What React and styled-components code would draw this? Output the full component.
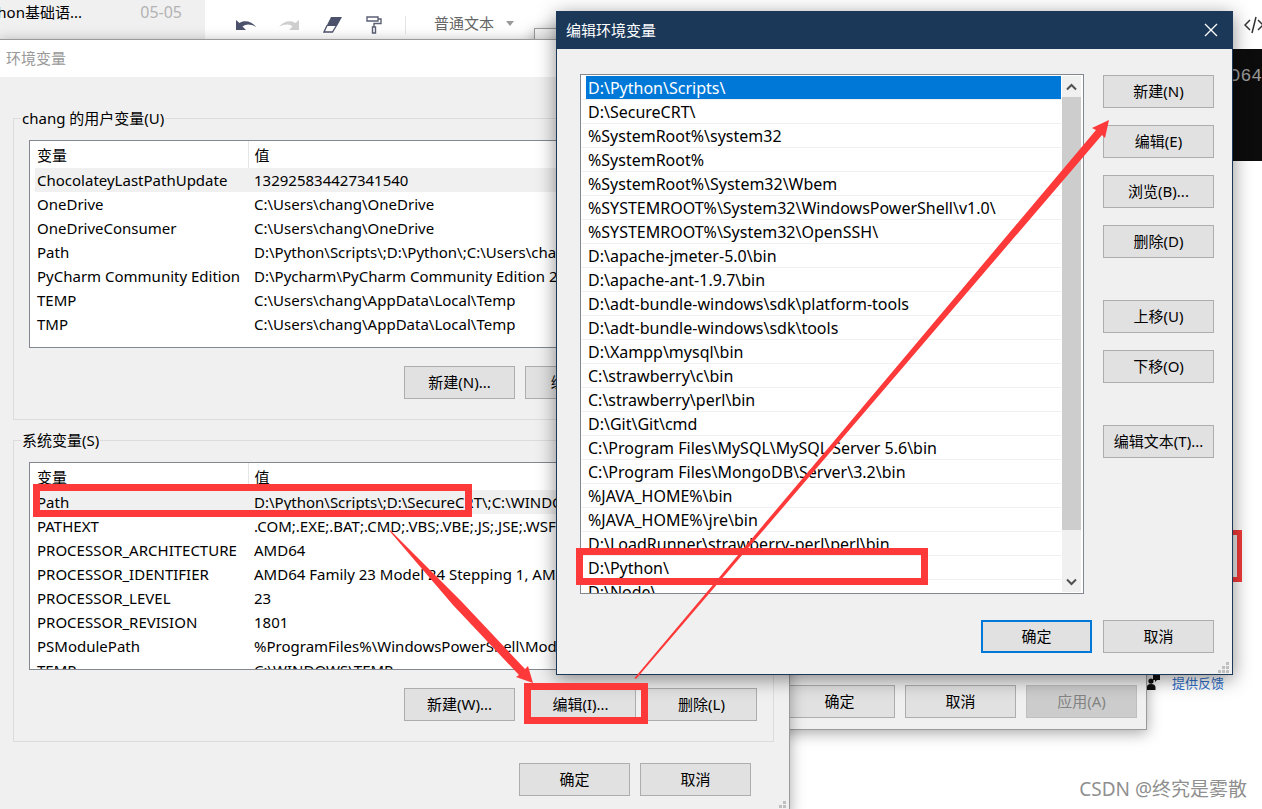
import React from "react";
import styled, { createGlobalStyle, css } from "styled-components";

const Global = createGlobalStyle`
  *, *::before, *::after { box-sizing: border-box; }
  html, body { margin: 0; padding: 0; }
  body {
    background: #fff;
    color: #000;
    font-family: "Noto Sans", "Noto Sans CJK SC", sans-serif;
    font-size: 15px;
    line-height: 24px;
  }
  button { font: inherit; color: inherit; }
`;

const Desktop = styled.main`
  position: relative;
  min-height: 100vh;
  overflow: hidden;
`;

/* ---------- editor page behind the dialogs ---------- */

const EditorHeader = styled.header`
  display: flex;
  align-items: stretch;
  height: 49px;
`;

const NoteTab = styled.div`
  display: flex;
  justify-content: space-between;
  width: 205px;
  padding-right: 23px;
  background: #f0f0f0;
`;

const NoteTitle = styled.span`
  width: 82px;
  overflow: hidden;
  direction: rtl;
  white-space: nowrap;
  text-align: right;
`;

const NoteDate = styled.time`
  color: #b3b3b3;
  font-size: 16px;
`;

const Toolbar = styled.div`
  flex: 1;
  display: flex;
  align-items: center;
  gap: 22px;
  padding-left: 30px;
`;

const IconButton = styled.button`
  display: flex;
  padding: 0;
  border: 0;
  background: none;
  svg { display: block; }
`;

const ToolDivider = styled.span`
  width: 1px;
  height: 18px;
  background: #e4e4e4;
`;

const StyleButton = styled.button`
  display: flex;
  align-items: center;
  gap: 12px;
  margin-left: 6px;
  padding: 0 0 3px;
  border: 0;
  background: none;
  color: #666;
`;

const CodeButton = styled(IconButton)`
  margin-left: auto;
`;

const Terminal = styled.pre`
  height: 112px;
  margin: 0;
  padding: 14px 0 0;
  overflow: hidden;
  background: #0c0c0c;
  color: #999;
  font: 18px/26px "Liberation Mono", monospace;
  text-align: right;
`;

const FocusFrame = styled.div`
  position: absolute;
  top: 530px;
  right: 20px;
  width: 60px;
  height: 52px;
  border: 5px solid #f23a3a;
  background: #e8e8e8;
`;

const Feedback = styled.a`
  position: absolute;
  top: 671px;
  right: 38px;
  display: flex;
  align-items: center;
  gap: 12px;
  color: #2f6fc9;
  font-size: 13px;
  text-decoration: none;
`;

const Watermark = styled.p`
  position: absolute;
  right: 15px;
  bottom: 8px;
  margin: 0;
  color: #8f8f8f;
  font-size: 19px;
`;

/* ---------- windows ---------- */

const Window = styled.section`
  position: absolute;
  background: #f0f0f0;
  border: 1px solid #9a9a9a;
  box-shadow: 0 3px 14px rgba(0, 0, 0, 0.35);
`;

const PropertiesWindow = styled(Window)`
  top: 28px;
  left: 534px;
  right: 115px;
  height: 702px;
  display: flex;
  align-items: flex-end;
  justify-content: flex-end;
  gap: 10px;
  padding: 0 9px 11px;
`;

const VariablesWindow = styled(Window)`
  top: 39px;
  left: -1px;
  right: 472px;
`;

const EditWindow = styled(Window)`
  top: 11px;
  left: 556px;
  right: 29px;
  border-color: #1b3859;
  box-shadow: 0 4px 18px rgba(0, 0, 0, 0.45);
`;

const TitleBar = styled.header`
  display: flex;
  align-items: center;
  justify-content: space-between;
  height: 37px;
  padding: 0 14px 2px ${(p) => (p.$active ? 9 : 6)}px;
  background: ${(p) => (p.$active ? "#1b3859" : "#fff")};
  color: ${(p) => (p.$active ? "#fff" : "#999")};
`;

const Title = styled.h2`
  margin: 0;
  font-size: 15px;
  font-weight: 400;
`;

const PushButton = styled.button`
  width: 111px;
  height: 33px;
  padding: 0 0 2px;
  border: 1px solid #adadad;
  background: #e1e1e1;
  ${(p) => p.$primary && css`border: 2px solid #0078d7;`}
  &:disabled {
    border-color: #bfbfbf;
    background: #ccc;
    color: #838383;
  }
`;

const ButtonRow = styled.div`
  display: flex;
  justify-content: flex-end;
  gap: 10px;
`;

const VariablesFooter = styled(ButtonRow)`
  padding: 0 38px 17px 13px;
`;

const VariablesBody = styled.div`
  display: flex;
  flex-direction: column;
  gap: 8px;
  padding: 29px 15px 21px 13px;
`;

const Group = styled.fieldset`
  min-width: 0;
  margin: 0;
  padding: 10px 16px 20px 15px;
  border: 1px solid #dcdcdc;
`;

const GroupLabel = styled.legend`
  margin-left: -8px;
  padding: 0 1px;
`;

const VariableList = styled.div`
  height: 208px;
  margin-bottom: 18px;
  padding-left: 5px;
  overflow: hidden;
  border: 1px solid #828790;
  background: #fff;
`;

const VariableTable = styled.table`
  width: 100%;
  table-layout: fixed;
  border-collapse: collapse;
  text-align: left;
  white-space: nowrap;
`;

const HeadCell = styled.th`
  width: ${(p) => (p.$name ? "213px" : "auto")};
  height: 27px;
  padding: 0 0 0 ${(p) => (p.$name ? 2 : 6)}px;
  border-right: 1px solid #e5e5e5;
  font-weight: 400;
`;

const VariableRow = styled.tr`
  height: 24px;
  background: ${(p) => (p.$selected ? "#f0f0f0" : "#fff")};
`;

const Cell = styled.td`
  height: 24px;
  padding: 0 0 0 ${(p) => (p.$name ? 2 : 6)}px;
  overflow: hidden;
`;

const EditBody = styled.div`
  display: grid;
  grid-template-columns: minmax(0, 1fr) 111px;
  column-gap: 19px;
  row-gap: 26px;
  padding: 25px 18px 21px 23px;
`;

const PathBox = styled.div`
  display: flex;
  gap: 1px;
  height: 520px;
  padding: 1px 2px 1px 1px;
  overflow: hidden;
  border: 1px solid #828790;
  background: #fff;
`;

const PathList = styled.ul`
  flex: 1;
  min-width: 0;
  margin: 0;
  padding: 0;
  list-style: none;
`;

const PathItem = styled.li`
  height: 24px;
  padding-left: 4px;
  border-bottom: 1px solid #f0f0f0;
`;

const PathText = styled.span`
  display: block;
  height: 23px;
  padding-left: 2px;
  overflow: hidden;
  white-space: nowrap;
  font-size: 16px;
  background: ${(p) => (p.$selected ? "#0078d7" : "none")};
  color: ${(p) => (p.$selected ? "#fff" : "#000")};
`;

const ScrollBar = styled.div`
  display: flex;
  flex-direction: column;
  width: 19px;
  background: #f0f0f0;
`;

const ScrollArrow = styled.button`
  display: flex;
  align-items: center;
  justify-content: center;
  height: 21px;
  padding: 0;
  border: 0;
  background: none;
`;

const ScrollThumb = styled.div`
  height: 433px;
  margin-bottom: auto;
  background: #cdcdcd;
`;

const SideButtons = styled.div`
  display: flex;
  flex-direction: column;
  gap: 17px;
  padding-top: 1px;
`;

const SideGroup = styled.div`
  display: flex;
  flex-direction: column;
  gap: 17px;
  margin-bottom: 25px;
`;

const EditFooter = styled(ButtonRow)`
  grid-column: 1 / -1;
  gap: 11px;
`;

const Grip = styled.svg`
  position: absolute;
  right: 3px;
  bottom: 1px;
`;

const Annotations = styled.svg`
  position: absolute;
  top: 0;
  left: 0;
  pointer-events: none;
`;

/* ---------- data ---------- */

const userVariables = [
  ["ChocolateyLastPathUpdate", "132925834427341540"],
  ["OneDrive", "C:\\Users\\chang\\OneDrive"],
  ["OneDriveConsumer", "C:\\Users\\chang\\OneDrive"],
  ["Path", "D:\\Python\\Scripts\\;D:\\Python\\;C:\\Users\\chang"],
  ["PyCharm Community Edition", "D:\\Pycharm\\PyCharm Community Edition 2"],
  ["TEMP", "C:\\Users\\chang\\AppData\\Local\\Temp"],
  ["TMP", "C:\\Users\\chang\\AppData\\Local\\Temp"],
];

const systemVariables = [
  ["Path", "D:\\Python\\Scripts\\;D:\\SecureCRT\\;C:\\WINDOWS"],
  ["PATHEXT", ".COM;.EXE;.BAT;.CMD;.VBS;.VBE;.JS;.JSE;.WSF"],
  ["PROCESSOR_ARCHITECTURE", "AMD64"],
  ["PROCESSOR_IDENTIFIER", "AMD64 Family 23 Model 24 Stepping 1, AMD"],
  ["PROCESSOR_LEVEL", "23"],
  ["PROCESSOR_REVISION", "1801"],
  ["PSModulePath", "%ProgramFiles%\\WindowsPowerShell\\Modules"],
  ["TEMP", "C:\\WINDOWS\\TEMP"],
];

const paths = [
  "D:\\Python\\Scripts\\",
  "D:\\SecureCRT\\",
  "%SystemRoot%\\system32",
  "%SystemRoot%",
  "%SystemRoot%\\System32\\Wbem",
  "%SYSTEMROOT%\\System32\\WindowsPowerShell\\v1.0\\",
  "%SYSTEMROOT%\\System32\\OpenSSH\\",
  "D:\\apache-jmeter-5.0\\bin",
  "D:\\apache-ant-1.9.7\\bin",
  "D:\\adt-bundle-windows\\sdk\\platform-tools",
  "D:\\adt-bundle-windows\\sdk\\tools",
  "D:\\Xampp\\mysql\\bin",
  "C:\\strawberry\\c\\bin",
  "C:\\strawberry\\perl\\bin",
  "D:\\Git\\Git\\cmd",
  "C:\\Program Files\\MySQL\\MySQL Server 5.6\\bin",
  "C:\\Program Files\\MongoDB\\Server\\3.2\\bin",
  "%JAVA_HOME%\\bin",
  "%JAVA_HOME%\\jre\\bin",
  "D:\\LoadRunner\\strawberry-perl\\perl\\bin",
  "D:\\Python\\",
  "D:\\Node\\",
];

/* ---------- pieces ---------- */

function SizeGrip() {
  return (
    <Grip width="11" height="11" viewBox="0 0 11 11" fill="#bfbfbf" aria-hidden="true">
      <path d="M8 0h3v3h-3zM4 4h3v3h-3zM8 4h3v3h-3zM0 8h3v3h-3zM4 8h3v3h-3zM8 8h3v3h-3z" />
    </Grip>
  );
}

function Variables({ label, rows, buttons }) {
  return (
    <Group>
      <GroupLabel>{label}</GroupLabel>
      <VariableList>
        <VariableTable>
          <thead>
            <tr>
              <HeadCell $name>变量</HeadCell>
              <HeadCell>值</HeadCell>
            </tr>
          </thead>
          <tbody>
            {rows.map(([name, value], i) => (
              <VariableRow key={name} $selected={i === 0}>
                <Cell $name>{name}</Cell>
                <Cell>{value}</Cell>
              </VariableRow>
            ))}
          </tbody>
        </VariableTable>
      </VariableList>
      <ButtonRow>
        {buttons.map((b) => (
          <PushButton key={b}>{b}</PushButton>
        ))}
      </ButtonRow>
    </Group>
  );
}

function Chevron({ up }) {
  return (
    <svg width="11" height="8" viewBox="0 0 11 8" fill="none" stroke="#505050" strokeWidth="2">
      <path d={up ? "M1 6.5 5.5 2 10 6.5" : "M1 1.5 5.5 6 10 1.5"} />
    </svg>
  );
}

export default function App() {
  return (
    <Desktop>
      <Global />
      <EditorHeader>
        <NoteTab>
          <NoteTitle><bdi>python基础语...</bdi></NoteTitle>
          <NoteDate>05-05</NoteDate>
        </NoteTab>
        <Toolbar>
          <IconButton aria-label="撤销">
            <svg width="22" height="16" viewBox="0 0 22 16">
              <path d="M1 3v10h10L7.500 9.500C11 7 15 6.500 21 10 17 4 9 2.500 4.500 6z" fill="#4c526b" />
            </svg>
          </IconButton>
          <IconButton aria-label="重做">
            <svg width="22" height="16" viewBox="0 0 22 16">
              <path d="M20 3v10H10l3.500-3.500C11 7 6 6.500 0 10 4 4 12 2.500 16.500 6z" fill="#cfcfcf" />
            </svg>
          </IconButton>
          <IconButton aria-label="清除格式">
            <svg width="20" height="18" viewBox="0 0 20 18">
              <path d="M8 1h11l-5 9H3.500z" fill="#4c526b" />
              <path d="M4 9.500 1 16h8.500l4-6.500" fill="none" stroke="#4c526b" strokeWidth="1.300" />
            </svg>
          </IconButton>
          <IconButton aria-label="格式刷">
            <svg width="18" height="20" viewBox="0 0 18 20" fill="none" stroke="#5a5f75" strokeWidth="1.400">
              <path d="M2 2h11v4H2zM13 4h3v4.500H9V12M7.500 12h3v6h-3z" />
            </svg>
          </IconButton>
          <ToolDivider />
          <StyleButton>
            普通文本
            <svg width="8" height="5" viewBox="0 0 8 5" fill="#999"><path d="M0 0h8L4 5z" /></svg>
          </StyleButton>
          <CodeButton aria-label="代码">
            <svg width="18" height="18" viewBox="0 0 18 18" fill="none" stroke="#333" strokeWidth="1.500">
              <path d="M6 4 1 9l5 5M12 1 8 17M14 4l5 5-5 5" />
            </svg>
          </CodeButton>
        </Toolbar>
      </EditorHeader>
      <Terminal>AMD64</Terminal>
      <FocusFrame />
      <Feedback href="#feedback">
        <svg width="13" height="16" viewBox="0 0 13 16" fill="#111">
          <path d="M6 0h7v5h-3l-2 2V5H6zM0 15v-3q0-3 4-3t4.500 3v3zM4 3.500a2.600 2.600 0 1 1 0 5.200 2.600 2.600 0 0 1 0-5.200z" />
        </svg>
        提供反馈
      </Feedback>
      <Watermark>CSDN @终究是雾散</Watermark>

      <PropertiesWindow aria-label="系统属性">
        <PushButton>确定</PushButton>
        <PushButton>取消</PushButton>
        <PushButton disabled>应用(A)</PushButton>
      </PropertiesWindow>

      <VariablesWindow>
        <TitleBar>
          <Title>环境变量</Title>
        </TitleBar>
        <VariablesBody>
          <Variables label="chang 的用户变量(U)" rows={userVariables} buttons={["新建(N)...", "编辑(E)...", "删除(D)"]} />
          <Variables label="系统变量(S)" rows={systemVariables} buttons={["新建(W)...", "编辑(I)...", "删除(L)"]} />
        </VariablesBody>
        <VariablesFooter>
          <PushButton>确定</PushButton>
          <PushButton>取消</PushButton>
        </VariablesFooter>
        <SizeGrip />
      </VariablesWindow>

      <EditWindow>
        <TitleBar $active>
          <Title>编辑环境变量</Title>
          <IconButton aria-label="关闭">
            <svg width="14" height="14" viewBox="0 0 14 14" stroke="#fff" strokeWidth="1.300">
              <path d="M1 1 13 13M13 1 1 13" />
            </svg>
          </IconButton>
        </TitleBar>
        <EditBody>
          <PathBox>
            <PathList>
              {paths.map((p, i) => (
                <PathItem key={p}>
                  <PathText $selected={i === 0}>{p}</PathText>
                </PathItem>
              ))}
            </PathList>
            <ScrollBar>
              <ScrollArrow aria-label="向上滚动"><Chevron up /></ScrollArrow>
              <ScrollThumb />
              <ScrollArrow aria-label="向下滚动"><Chevron /></ScrollArrow>
            </ScrollBar>
          </PathBox>
          <SideButtons>
            <SideGroup>
              <PushButton>新建(N)</PushButton>
              <PushButton>编辑(E)</PushButton>
              <PushButton>浏览(B)...</PushButton>
              <PushButton>删除(D)</PushButton>
            </SideGroup>
            <SideGroup>
              <PushButton>上移(U)</PushButton>
              <PushButton>下移(O)</PushButton>
            </SideGroup>
            <PushButton>编辑文本(T)...</PushButton>
          </SideButtons>
          <EditFooter>
            <PushButton $primary>确定</PushButton>
            <PushButton>取消</PushButton>
          </EditFooter>
        </EditBody>
        <SizeGrip />
      </EditWindow>

      <Annotations width="1262" height="809" viewBox="0 0 1262 809" aria-hidden="true">
        <g fill="none" stroke="#fd3939" strokeWidth="7">
          <rect x="36.500" y="487.500" width="432" height="26" />
          <rect x="527.500" y="686.500" width="117" height="34" />
          <rect x="579.500" y="551.500" width="345" height="30" />
        </g>
        <g fill="#fd3939">
          <path d="M390 530 461 601 525 669 528 666 533 683 516 677 519 675 453 605 389.500 531z" />
          <path d="M634.500 678 1096 130 1092 128 1109 120 1105 138 1102 135 636 679z" />
        </g>
      </Annotations>
    </Desktop>
  );
}
